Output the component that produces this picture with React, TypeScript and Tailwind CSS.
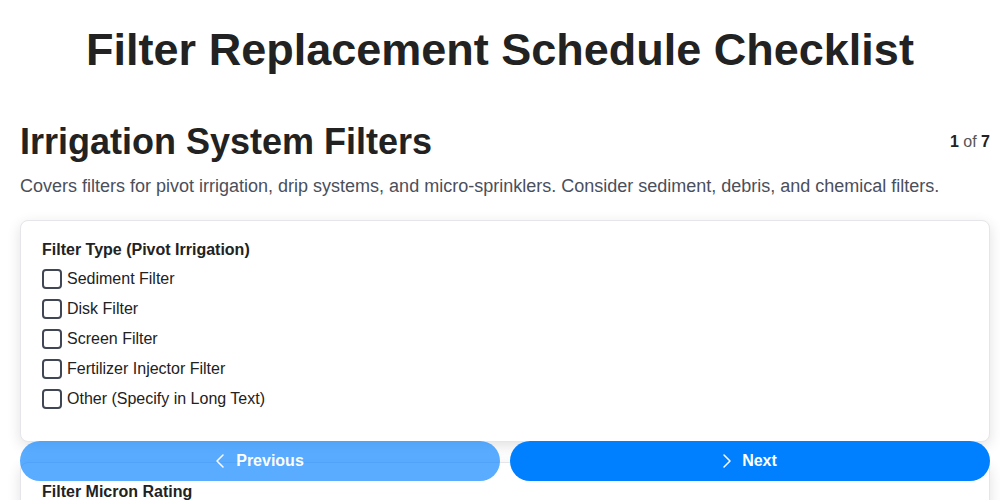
import { ChevronLeft, ChevronRight } from 'lucide-react'

interface Section {
  title: string
  options: string[]
}

const sections: Section[] = [
  {
    title: 'Filter Type (Pivot Irrigation)',
    options: [
      'Sediment Filter',
      'Disk Filter',
      'Screen Filter',
      'Fertilizer Injector Filter',
      'Other (Specify in Long Text)',
    ],
  },
  {
    title: 'Filter Micron Rating',
    options: ['20 Micron', '50 Micron', '100 Micron', '120 Micron', '200 Micron'],
  },
]

function CheckRow({ label }: { label: string }) {
  return (
    <label className="flex items-center h-[30px] gap-[5px] cursor-pointer">
      <span className="w-5 h-5 rounded-[4px] border-2 border-[#414654] bg-white shrink-0" />
      <span className="text-base text-[#222]">{label}</span>
    </label>
  )
}

function Card({ section }: { section: Section }) {
  return (
    <div className="bg-white border border-[#e6e6ea] rounded-lg shadow-[0_4px_14px_rgba(0,0,0,0.12)] pt-[17px] pb-[27px] px-[21px]">
      <div className="text-base font-bold leading-6 text-[#222]">{section.title}</div>
      <div className="mt-0.5 flex flex-col">
        {section.options.map((o) => (
          <CheckRow key={o} label={o} />
        ))}
      </div>
    </div>
  )
}

export default function App() {
  return (
    <div className="h-screen overflow-y-auto [scrollbar-width:none] bg-white font-['Liberation_Sans',Arial,sans-serif] text-[#222]">
      <h1 className="pt-[23px] text-center text-[45px] leading-[54px] font-bold">
        Filter Replacement Schedule Checklist
      </h1>

      <div className="pl-5 pr-2.5 mt-[45px]">
        <div className="flex items-center justify-between">
          <h2 className="text-4xl leading-10 font-bold">Irrigation System Filters</h2>
          <div className="text-base text-[#555]">
            <span className="font-bold text-[#222]">1</span> of <span className="font-bold text-[#222]">7</span>
          </div>
        </div>
        <p className="mt-2.5 text-lg leading-7 text-[#4a4f5c]">
          Covers filters for pivot irrigation, drip systems, and micro-sprinklers. Consider sediment, debris, and chemical filters.
        </p>

        <div className="mt-5 flex flex-col gap-5 pb-24">
          {sections.map((s) => (
            <Card key={s.title} section={s} />
          ))}
        </div>
      </div>

      {/* Navigation bar */}
      <div className="fixed inset-x-0 bottom-0 pl-5 pr-2.5 pb-[19px] flex gap-2.5">
        <button
          disabled
          className="flex-1 h-10 pr-2 rounded-full bg-[#0080ff] opacity-65 text-white font-bold text-base flex items-center justify-center gap-1"
        >
          <ChevronLeft size={24} strokeWidth={1.5} />
          Previous
        </button>
        <button className="flex-1 h-10 pr-2 rounded-full bg-[#0080ff] text-white font-bold text-base flex items-center justify-center gap-[3px]">
          <ChevronRight size={24} strokeWidth={1.5} />
          Next
        </button>
      </div>
    </div>
  )
}
